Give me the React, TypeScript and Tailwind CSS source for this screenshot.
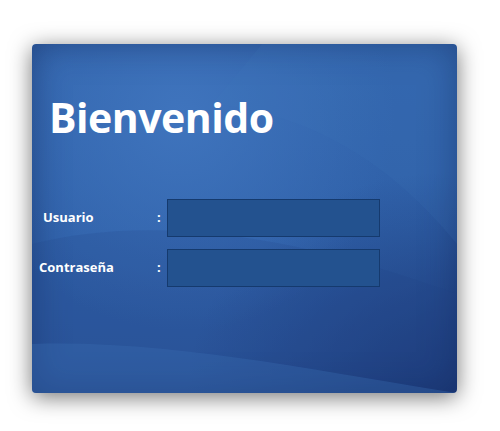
import React from "react";

function Field({ label, pad }: { label: string; pad: string }) {
  return (
    <div className="flex items-center h-[38px]">
      <span className={`w-[125px] ${pad} text-[13px] font-bold text-white`}>{label}</span>
      <span className="w-[10px] text-[13px] font-bold text-white">:</span>
      <div className="w-[213px] h-[38px] bg-[#23528f] border border-[#153a6e]" />
    </div>
  );
}

export default function App() {
  return (
    <div className="w-[500px] h-[431px] bg-white pt-[44px] pl-[32px] font-['Open_Sans',sans-serif]">
      <div className="relative w-[425px] h-[349px] rounded-[4px] overflow-hidden shadow-[0_4px_22px_rgba(0,0,0,0.55),inset_0_0_34px_rgba(15,35,85,0.5)] bg-[radial-gradient(ellipse_at_35%_20%,#3f74bd_0%,transparent_55%),radial-gradient(ellipse_at_100%_100%,#1d3b7a_0%,transparent_45%),linear-gradient(180deg,#3366ae_0%,#2f60a8_55%,#2b559b_100%)]">
        <svg className="absolute inset-0" width="425" height="349" viewBox="0 0 425 349">
          <path d="M0 200 C120 170 260 190 425 250 L425 349 L0 349 Z" fill="#1f4386" opacity="0.18" />
          <path d="M0 300 C140 295 300 330 425 349 L0 349 Z" fill="#3a6cb3" opacity="0.35" />
          <path d="M180 60 C280 70 360 120 425 200 L425 0 L230 0 Z" fill="#4478bf" opacity="0.12" />
        </svg>
        <div className="relative">
          <h1 className="pl-[17px] pt-[45px] text-[41px] leading-[56px] font-bold text-white tracking-[-0.5px]">Bienvenido</h1>
          <div className="mt-[54px] flex flex-col gap-[12px]">
            <Field label="Usuario" pad="pl-[11px]" />
            <Field label="Contraseña" pad="pl-[7px]" />
          </div>
        </div>
      </div>
    </div>
  );
}
